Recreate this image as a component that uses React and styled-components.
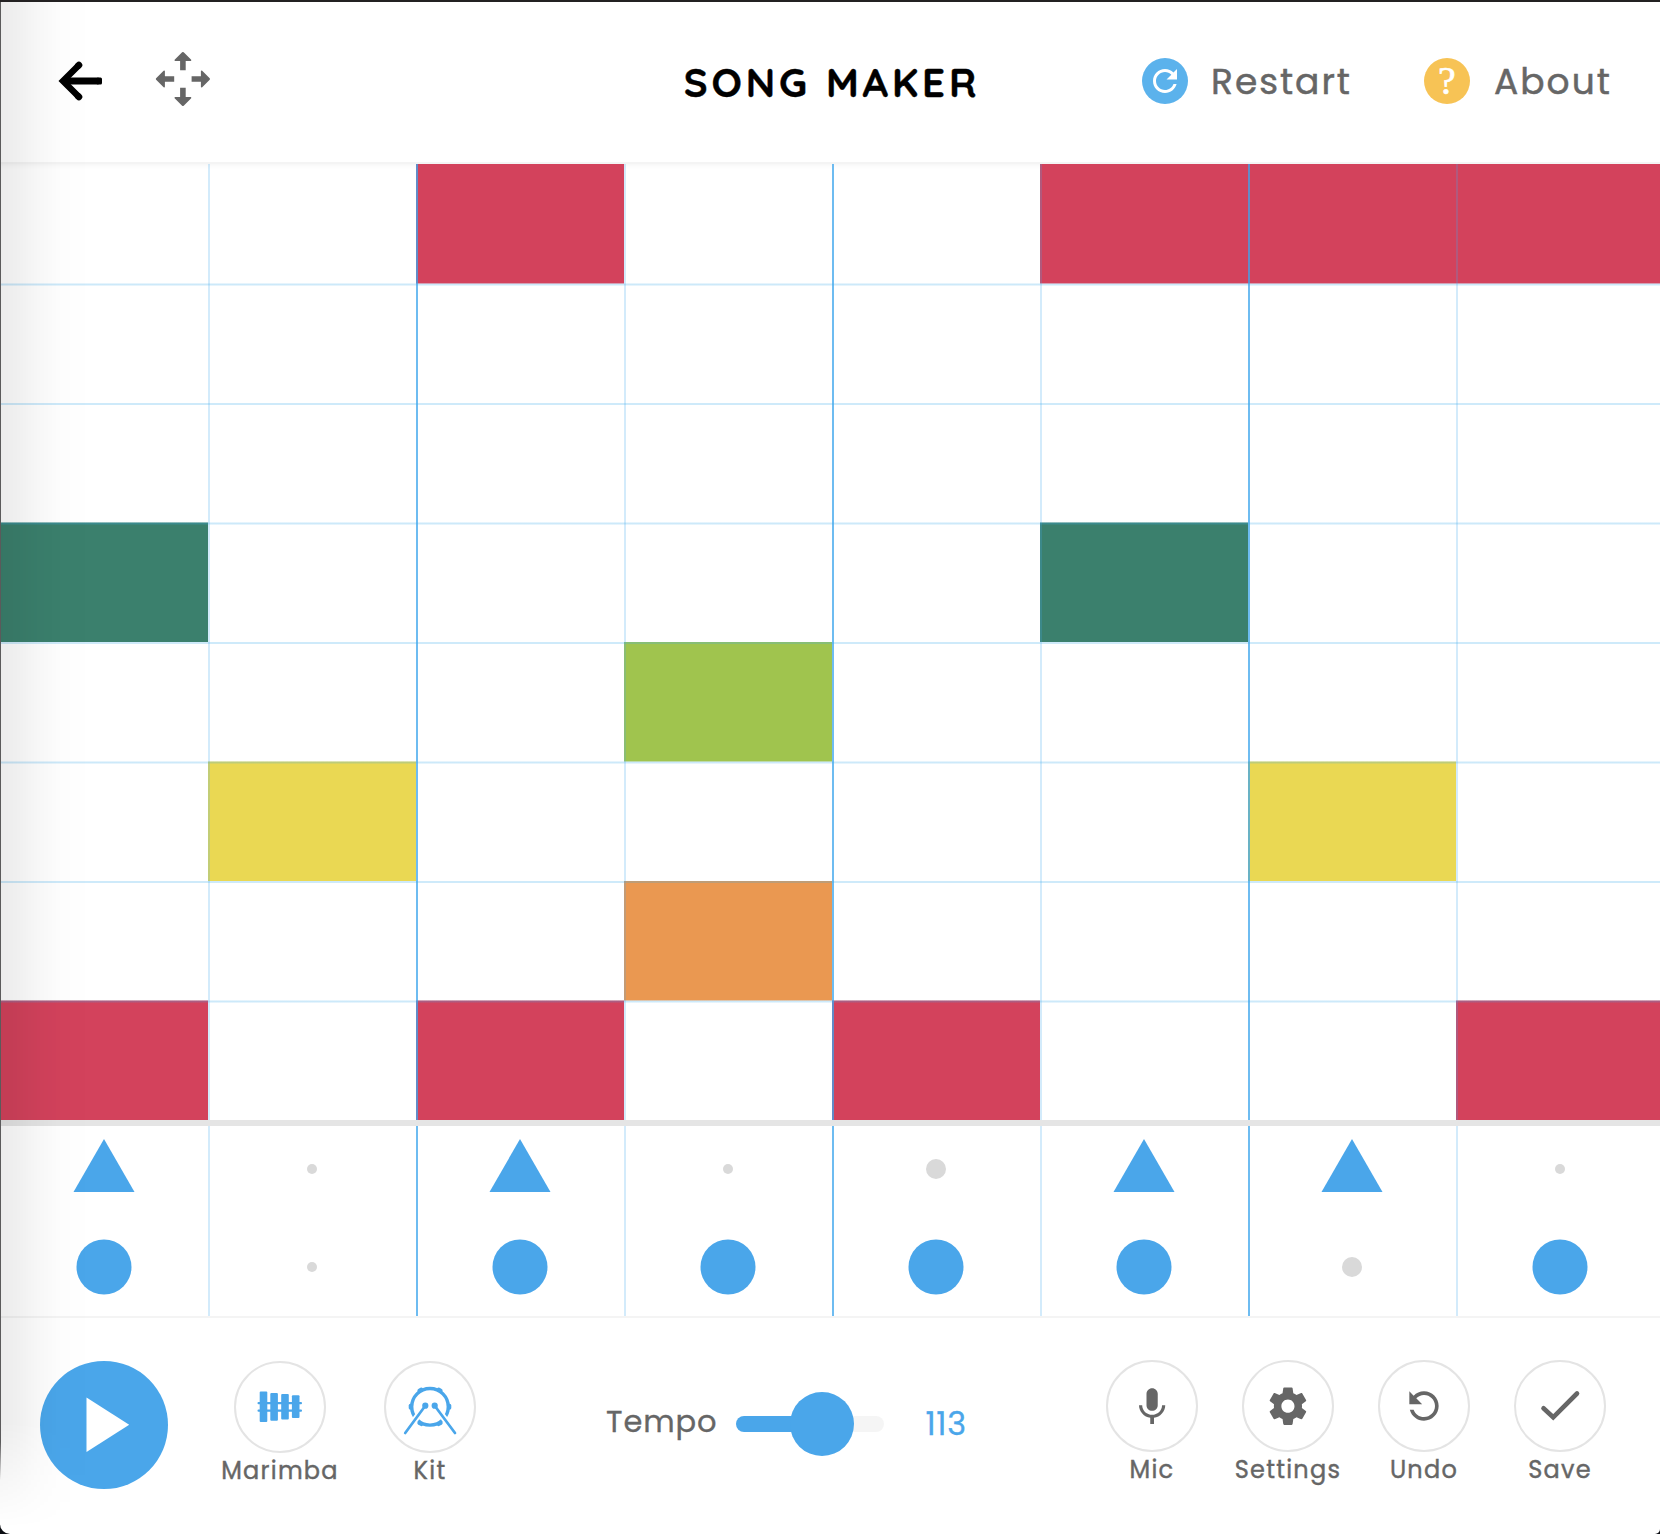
import React from "react";
import styled, { createGlobalStyle, css } from "styled-components";

const BLUE = "#4aa6ea";
const GREY = "#666";
const COLORS = {
  red: "#d3425c",
  green: "#3b806d",
  lime: "#a0c44e",
  yellow: "#ead853",
  orange: "#ea9851",
};
const FONT = `Poppins, Inter, "Open Sans", sans-serif`;

const Global = createGlobalStyle`
  * { box-sizing: border-box; }
  html, body { margin: 0; background: #0b0d12; }
  body { width: 1660px; height: 1534px; overflow: hidden; font-family: ${FONT}; }
  button { border: 0; padding: 0; background: none; font: inherit; color: inherit; }
`;

const Backdrop = styled.div`
  width: 1660px;
  height: 1534px;
  border-top: 2px solid #232122;
  background: #0b0d12;
`;

const Window = styled.main`
  position: relative;
  height: 1532px;
  display: flex;
  flex-direction: column;
  background: #fff;
  border-radius: 0 0 5px 10px;
  overflow: hidden;
`;

const EdgeLine = styled.div`
  position: absolute;
  z-index: 4;
  left: 0;
  top: 0;
  width: 1px;
  height: 1478px;
  background: linear-gradient(#5b5a5b 0 1440px, rgba(91, 90, 91, 0));
`;

const EdgeShade = styled.div`
  position: absolute;
  z-index: 3;
  inset: 0 auto 0 0;
  width: 92px;
  pointer-events: none;
  background: linear-gradient(
    90deg,
    rgba(0, 0, 0, 0.075) 0,
    rgba(0, 0, 0, 0.062) 16px,
    rgba(0, 0, 0, 0.03) 38px,
    rgba(0, 0, 0, 0.009) 62px,
    transparent 92px
  );
  mask-image: linear-gradient(#000 0 1420px, transparent 1526px);
`;

const Header = styled.header`
  height: 162px;
  flex: none;
  display: grid;
  grid-template-columns: 1fr auto 1fr;
  border-bottom: 2px solid #f4f4f4;
`;

const HeaderLeft = styled.div`
  display: flex;
  align-items: flex-start;
  padding: 44px 0 0 56px;
  gap: 49px;
`;

const Title = styled.h1`
  margin: 0 -4px 0 0;
  padding-top: 57px;
  color: #000;
  font: 700 40px/46px Quicksand, Inter, sans-serif;
  letter-spacing: 3.9px;
  -webkit-text-stroke: 0.4px #000;
  white-space: nowrap;
`;

const HeaderRight = styled.nav`
  display: flex;
  justify-content: flex-end;
  padding: 56px 0 0;
`;

const HeaderAction = styled.button`
  display: flex;
  align-items: flex-start;
  gap: ${(p) => p.$gap}px;
  width: ${(p) => p.$width}px;
  height: 46px;
  color: ${GREY};
  font-size: 36px;
  font-weight: 400;
  line-height: 48px;
  letter-spacing: 2px;
  -webkit-text-stroke: 0.5px ${GREY};
  white-space: nowrap;
`;

const Badge = styled.span`
  flex: none;
  width: 46px;
  height: 46px;
  border-radius: 50%;
  background: ${(p) => p.$color};
  color: #fff;
  display: flex;
  align-items: center;
  justify-content: center;
  font: 400 40px/46px "Liberation Serif", serif;
  -webkit-text-stroke: 0.6px #fff;
  letter-spacing: 0;
`;

const Melody = styled.section`
  flex: none;
  height: 956px;
  display: grid;
  grid-template-rows: repeat(4, 119px 120px);
  box-shadow: inset 0 6px 5px -5px rgba(0, 0, 0, 0.05);
`;

const Row = styled.div`
  position: relative;
  display: grid;
  grid-template-columns: repeat(8, 208px);
  ${(p) =>
    p.$index > 0 &&
    css`
      &::after {
        content: "";
        position: absolute;
        left: 0;
        right: 0;
        top: 0;
        height: ${p.$index % 2 ? 3 : 2}px;
        background: ${p.$index % 2
          ? "linear-gradient(rgba(60,170,234,.13) 0 1px, rgba(60,170,234,.26) 1px 2px, rgba(60,170,234,.13) 2px 3px)"
          : "rgba(60,170,234,.25)"};
      }
    `}
`;

const cellLine = css`
  ${(p) =>
    p.$col > 0 &&
    css`
      &::before {
        content: "";
        align-self: stretch;
        flex: none;
        width: 2px;
        margin-right: -2px;
        background: ${p.$col % 2 ? "rgba(64,170,238,.23)" : "rgba(60,165,236,.74)"};
      }
    `}
`;

const Cell = styled.div`
  display: flex;
  ${(p) =>
    p.$note &&
    (p.$half
      ? css`
          background: linear-gradient(${COLORS[p.$note]}80 0 1px, ${COLORS[p.$note]} 1px);
        `
      : css`
          background: ${COLORS[p.$note]};
          box-shadow: 0 1px 0 ${COLORS[p.$note]}80;
        `)}
  ${cellLine}
`;

const Beats = styled.section`
  flex: none;
  height: 198px;
  display: grid;
  grid-template-columns: repeat(8, 208px);
  border-top: 6px solid #e5e5e5;
  border-bottom: 2px solid #f4f4f4;
`;

const BeatColumn = styled.div`
  display: flex;
  ${cellLine}
`;

const BeatStack = styled.div`
  width: 208px;
  display: grid;
  grid-template-rows: 86px 98px;
  row-gap: 6px;
  height: 190px;
`;

const Beat = styled.div`
  display: flex;
  align-items: center;
  justify-content: center;
  svg { display: block; }
`;

const Dot = styled.span`
  width: ${(p) => p.$size}px;
  height: ${(p) => p.$size}px;
  border-radius: 50%;
  background: ${(p) => p.$color};
  ${(p) => p.$size % 2 === 1 && "transform: translate(-0.5px, -0.5px);"}
`;

const Footer = styled.footer`
  flex: 1;
  display: flex;
  align-items: flex-start;
  padding: 42px 32px 0 40px;
`;

const PlayButton = styled.button`
  width: 128px;
  height: 128px;
  flex: none;
  border-radius: 50%;
  background: ${BLUE};
  margin: 1px 37px 0 0;
  svg { display: block; }
`;

const Tools = styled.div`
  display: flex;
  margin-top: ${(p) => p.$top || 0}px;
`;

const Tool = styled.button`
  width: ${(p) => p.$width}px;
  display: flex;
  flex-direction: column;
  align-items: center;
  color: ${GREY};
`;

const Ring = styled.span`
  width: 92px;
  height: 92px;
  border: 2px solid #e4e4e4;
  border-radius: 50%;
  display: flex;
  align-items: center;
  justify-content: center;
  svg { display: block; flex: none; }
`;

const ToolLabel = styled.span`
  font-size: 24px;
  font-weight: 400;
  line-height: 28px;
  margin-top: 4px;
  letter-spacing: 1.25px;
  -webkit-text-stroke: 0.4px ${GREY};
`;

const Tempo = styled.label`
  display: flex;
  align-items: center;
  height: 64px;
  margin: 32px 0 0 101px;
`;

const TempoText = styled.span`
  width: 130px;
  color: ${GREY};
  font-size: 30.5px;
  line-height: 36px;
  letter-spacing: 0.9px;
  margin-top: -4px;
  -webkit-text-stroke: 0.3px ${GREY};
`;

const Track = styled.span`
  width: 148px;
  height: 16px;
  border-radius: 8px;
  background: linear-gradient(90deg, ${BLUE} 0 86px, #f5f5f5 86px);
  display: flex;
  align-items: center;
  padding-left: 54px;
`;

const Thumb = styled.span`
  flex: none;
  width: 64px;
  height: 64px;
  border-radius: 50%;
  background: ${BLUE};
`;

const TempoValue = styled.span`
  color: ${BLUE};
  font-size: 32px;
  line-height: 36px;
  letter-spacing: 0.6px;
  margin: -1px 0 0 41.5px;
  -webkit-text-stroke: 0.3px ${BLUE};
`;

const Spacer = styled.div`
  flex: 1;
`;

const REFRESH =
  "M17.65 6.35C16.2 4.9 14.21 4 12 4c-4.42 0-7.99 3.58-7.99 8s3.57 8 7.99 8c3.73 0 6.84-2.55 7.73-6h-2.08c-.82 2.33-3.04 4-5.65 4-3.31 0-6-2.69-6-6s2.69-6 6-6c1.66 0 3.14.69 4.22 1.78L13 11h7V4l-2.35 2.35z";

const BackIcon = () => (
  <svg width="50" height="70" viewBox="56 46 50 70" fill="none" stroke="#000">
    <path d="M78.8 65.2 63 81l15.8 15.8" strokeWidth="6.4" />
    <path d="M78.3 65.7l.6-.6M78.3 96.3l.6.6" strokeWidth="6.8" strokeLinecap="round" />
    <path d="M65 81h33.5" strokeWidth="7.2" />
    <path d="M98 78.9h2.5v4.2H98z" strokeWidth="3" strokeLinejoin="round" />
  </svg>
);

const MoveIcon = () => (
  <svg width="56" height="66" viewBox="155.1 46 56 66" fill={GREY}>
    {[0, 90, 180, 270].map((a) => (
      <path
        key={a}
        transform={`rotate(${a} 183 79)`}
        d="M182.2 52.2q.8-.6 1.6 0l7.5 7.5q.3 1.3-.5 1.3h-5v9.3h-5.6V61h-5q-.8 0-.5-1.3z"
      />
    ))}
  </svg>
);

const RefreshIcon = ({ size, flip, color }) => (
  <svg width={size} height={size} viewBox="0 0 24 24" fill={color}>
    <path d={REFRESH} transform={flip ? "translate(24 0) scale(-1 1)" : undefined} />
  </svg>
);

const TriangleBeat = () => (
  <svg width="62" height="60" viewBox="73 1139 62 60">
    <path d="M104 1139l30.5 53h-61z" fill={BLUE} />
  </svg>
);

const PlayIcon = () => (
  <svg width="128" height="128" viewBox="40 1361 128 128">
    <path d="M86.5 1397.5v54.5l42.7-27.2z" fill="#fff" />
  </svg>
);

const MarimbaIcon = () => (
  <svg width="60" height="60" viewBox="250 1377 60 60" fill={BLUE}>
    <rect x="257.5" y="1402" width="44.5" height="2.2" rx="1" />
    <rect x="257.5" y="1409.5" width="44.5" height="2.3" rx="1" />
    <rect x="259.7" y="1391.5" width="7.6" height="30.5" rx="1" />
    <rect x="270.3" y="1393" width="7.6" height="27.8" rx="1" />
    <rect x="281.2" y="1394" width="7.6" height="25.5" rx="1" />
    <rect x="291.9" y="1395.3" width="7.6" height="22.8" rx="1" />
  </svg>
);

const KitIcon = () => (
  <svg width="64" height="64" viewBox="398 1375 64 64" fill="none" strokeLinecap="round">
    <circle cx="430" cy="1406.8" r="18.3" stroke={BLUE} strokeWidth="3.4" />
    <g fill={BLUE}>
      {[0, 60, 120, 180, 240, 300].map((a) => (
        <rect
          key={a}
          x="447.5"
          y="1403.8"
          width="3.8"
          height="6"
          rx="1.8"
          transform={`rotate(${a} 430 1406.8)`}
        />
      ))}
    </g>
    <path d="M425.3 1405.7 405 1433.3M434.7 1405.7 455.2 1433.3" stroke="#fff" strokeWidth="6.4" />
    <path d="M425.3 1405.7 405.2 1433M434.7 1405.7 455 1433" stroke={BLUE} strokeWidth="2.7" />
    <circle cx="425.3" cy="1405.7" r="3.1" fill={BLUE} />
    <circle cx="434.7" cy="1405.7" r="3.1" fill={BLUE} />
  </svg>
);

const MicIcon = () => (
  <svg width="45" height="45" viewBox=".2 -.3 24 24" fill={GREY}>
    <path d="M12 14c1.66 0 2.99-1.34 2.99-3L15 5c0-1.66-1.34-3-3-3S9 3.34 9 5v6c0 1.66 1.34 3 3 3zm5.3-3c0 3-2.54 5.1-5.3 5.1S6.7 14 6.7 11H5c0 3.41 2.72 6.23 6 6.72V21h2v-3.28c3.28-.48 6-3.3 6-6.72h-1.7z" />
  </svg>
);

const GearIcon = () => (
  <svg width="45" height="45" viewBox=".3 .2 24 24" fill={GREY}>
    <path d="M19.43 12.98c.04-.32.07-.64.07-.98s-.03-.66-.07-.98l2.11-1.65c.19-.15.24-.42.12-.64l-2-3.46c-.12-.22-.39-.3-.61-.22l-2.49 1c-.52-.4-1.08-.73-1.69-.98l-.38-2.65C14.46 2.18 14.25 2 14 2h-4c-.25 0-.46.18-.49.42l-.38 2.65c-.61.25-1.17.59-1.69.98l-2.49-1c-.23-.09-.49 0-.61.22l-2 3.46c-.13.22-.07.49.12.64l2.11 1.65c-.04.32-.07.65-.07.98s.03.66.07.98l-2.11 1.65c-.19.15-.24.42-.12.64l2 3.46c.12.22.39.3.61.22l2.49-1c.52.4 1.08.73 1.69.98l.38 2.65c.03.24.24.42.49.42h4c.25 0 .46-.18.49-.42l.38-2.65c.61-.25 1.17-.59 1.69-.98l2.49 1c.23.09.49 0 .61-.22l2-3.46c.12-.22.07-.49-.12-.64l-2.11-1.65zM12 15.5c-1.93 0-3.5-1.57-3.5-3.5s1.57-3.5 3.5-3.5 3.5 1.57 3.5 3.5-1.57 3.5-3.5 3.5z" />
  </svg>
);

const CheckIcon = () => (
  <svg width="50" height="50" viewBox="1535 1381 50 50" fill="none" stroke={GREY}>
    <path d="M1543.5 1408.3l9.7 9L1577 1393.5" strokeWidth="4.6" strokeLinecap="round" />
  </svg>
);

const MELODY = [
  [null, null, "red", null, null, "red", "red", "red"],
  [null, null, null, null, null, null, null, null],
  [null, null, null, null, null, null, null, null],
  ["green", null, null, null, null, "green", null, null],
  [null, null, null, "lime", null, null, null, null],
  [null, "yellow", null, null, null, null, "yellow", null],
  [null, null, null, "orange", null, null, null, null],
  ["red", null, "red", null, "red", null, null, "red"],
];
const HIGH = [1, 0, 1, 0, 0, 1, 1, 0];
const LOW = [1, 0, 1, 1, 1, 1, 0, 1];

const LEFT_TOOLS = [
  { label: "Marimba", icon: <MarimbaIcon /> },
  { label: "Kit", icon: <KitIcon /> },
];
const RIGHT_TOOLS = [
  { label: "Mic", icon: <MicIcon /> },
  { label: "Settings", icon: <GearIcon /> },
  { label: "Undo", icon: <RefreshIcon size={44} flip color={GREY} /> },
  { label: "Save", icon: <CheckIcon /> },
];

const ToolGroup = ({ items, width, top }) => (
  <Tools $top={top}>
    {items.map((t) => (
      <Tool key={t.label} $width={width}>
        <Ring>{t.icon}</Ring>
        <ToolLabel>{t.label}</ToolLabel>
      </Tool>
    ))}
  </Tools>
);

const emptySize = (col) => (col % 2 ? 10 : 20);

export default function App() {
  return (
    <>
      <Global />
      <Backdrop>
        <Window>
          <EdgeLine />
          <EdgeShade />
          <Header>
            <HeaderLeft>
              <button aria-label="Back"><BackIcon /></button>
              <button aria-label="Move"><MoveIcon /></button>
            </HeaderLeft>
            <Title>SONG MAKER</Title>
            <HeaderRight>
              <HeaderAction $width={282} $gap={23}>
                <Badge $color="#5bb2ec"><RefreshIcon size={36} color="#fff" /></Badge>
                Restart
              </HeaderAction>
              <HeaderAction $width={236} $gap={24}>
                <Badge $color="#f7c355">?</Badge>
                About
              </HeaderAction>
            </HeaderRight>
          </Header>
          <Melody>
            {MELODY.map((row, r) => (
              <Row key={r} $index={r}>
                {row.map((note, c) => (
                  <Cell key={c} $col={c} $note={note} $half={r % 2 === 1} />
                ))}
              </Row>
            ))}
          </Melody>
          <Beats>
            {HIGH.map((on, c) => (
              <BeatColumn key={c} $col={c}>
                <BeatStack>
                  <Beat>
                    {on ? <TriangleBeat /> : <Dot $size={emptySize(c)} $color="#d9d9d9" />}
                  </Beat>
                  <Beat>
                    {LOW[c] ? <Dot $size={55} $color={BLUE} /> : <Dot $size={emptySize(c)} $color="#d9d9d9" />}
                  </Beat>
                </BeatStack>
              </BeatColumn>
            ))}
          </Beats>
          <Footer>
            <PlayButton aria-label="Play"><PlayIcon /></PlayButton>
            <ToolGroup items={LEFT_TOOLS} width={150} top={1} />
            <Tempo>
              <TempoText>Tempo</TempoText>
              <Track><Thumb /></Track>
              <TempoValue>113</TempoValue>
            </Tempo>
            <Spacer />
            <ToolGroup items={RIGHT_TOOLS} width={136} />
          </Footer>
        </Window>
      </Backdrop>
    </>
  );
}
